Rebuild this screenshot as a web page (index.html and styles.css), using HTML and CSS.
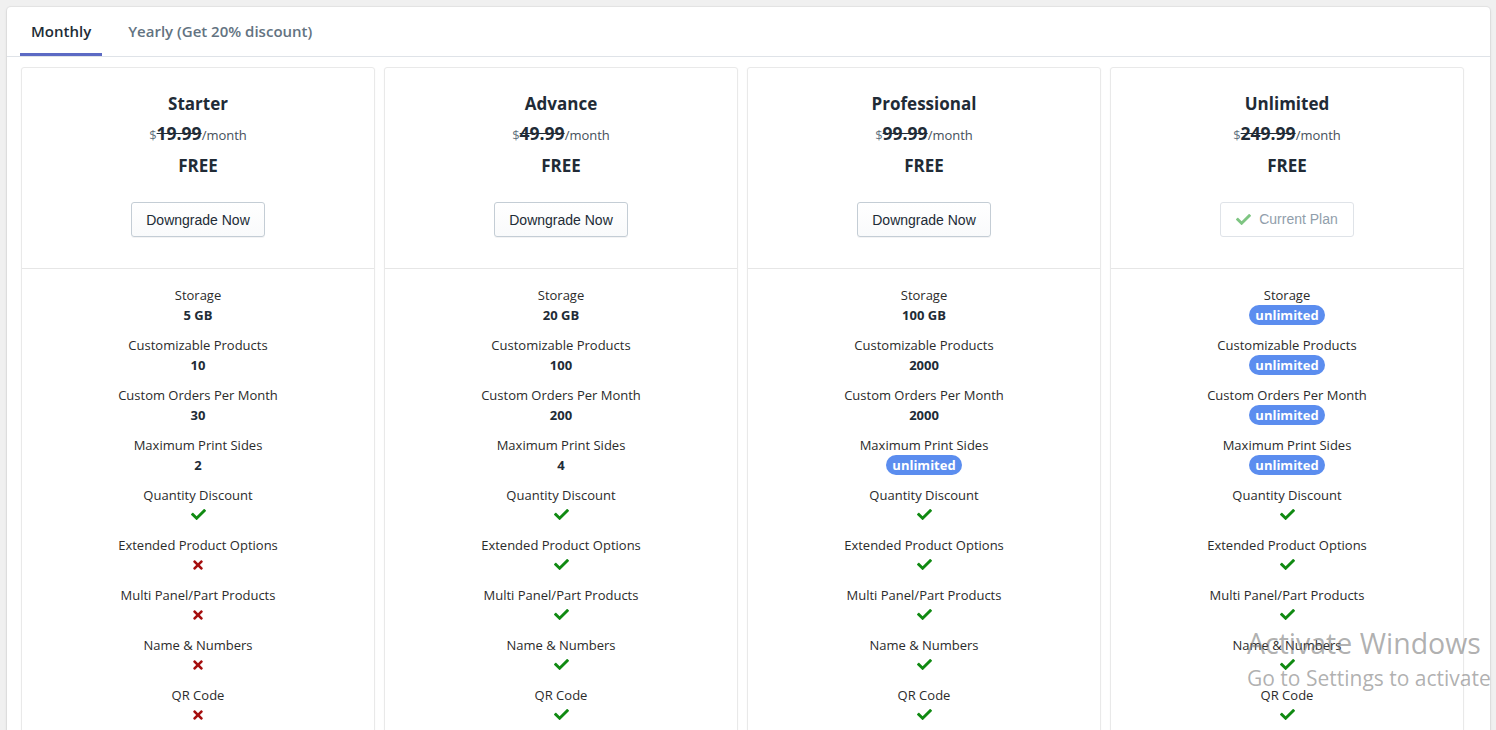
FILE: index.html
```html
<!DOCTYPE html>
<html lang="en">

<head>
    <meta charset="UTF-8">
    <meta name="viewport" content="width=device-width, initial-scale=1.0">
    <title>Plans</title>
    <link rel="stylesheet" href="styles.css">
</head>

<body>
    <div class="panel">
        <div class="tabs">
            <div class="tab active">Monthly</div>
            <div class="tab">Yearly (Get 20% discount)</div>
        </div>
        <div class="plans" id="plans"></div>
    </div>
    <div class="watermark">
        <div class="wm-title">Activate Windows</div>
        <div class="wm-sub">Go to Settings to activate</div>
    </div>
    <script>
        const features = ["Storage", "Customizable Products", "Custom Orders Per Month", "Maximum Print Sides",
            "Quantity Discount", "Extended Product Options", "Multi Panel/Part Products", "Name & Numbers", "QR Code"];
        const plans = [
            { name: "Starter", price: "19.99", values: ["5 GB", "10", "30", "2", true, false, false, false, false] },
            { name: "Advance", price: "49.99", values: ["20 GB", "100", "200", "4", true, true, true, true, true] },
            { name: "Professional", price: "99.99", values: ["100 GB", "2000", "2000", "unlimited", true, true, true, true, true] },
            { name: "Unlimited", price: "249.99", current: true, values: ["unlimited", "unlimited", "unlimited", "unlimited", true, true, true, true, true] }
        ];
        const checkIcon = '<svg class="icon" viewBox="0 0 512 512" width="15" height="15"><path d="M173.9 439.4l-166.4-166.4c-10-10-10-26.2 0-36.2l36.2-36.2c10-10 26.2-10 36.2 0L192 312.7 432.1 72.6c10-10 26.2-10 36.2 0l36.2 36.2c10 10 10 26.2 0 36.2L210.1 439.4c-10 10-26.2 10-36.2 0z"/></svg>';
        const crossIcon = '<svg class="icon" viewBox="0 0 352 512" width="10" height="14"><path d="M242.7 256l100.1-100.1c12.3-12.3 12.3-32.2 0-44.5l-22.2-22.2c-12.3-12.3-32.2-12.3-44.5 0L176 189.3 75.9 89.2c-12.3-12.3-32.2-12.3-44.5 0L9.2 111.5c-12.3 12.3-12.3 32.2 0 44.5L109.3 256 9.2 356.1c-12.3 12.3-12.3 32.2 0 44.5l22.2 22.2c12.3 12.3 32.2 12.3 44.5 0L176 322.7l100.1 100.1c12.3 12.3 32.2 12.3 44.5 0l22.2-22.2c12.3-12.3 12.3-32.2 0-44.5L242.7 256z"/></svg>';
        const container = document.getElementById("plans");
        plans.forEach(plan => {
            let rows = "";
            features.forEach((label, i) => {
                const v = plan.values[i];
                let value;
                if (v === true) value = '<span class="yes">' + checkIcon + '</span>';
                else if (v === false) value = '<span class="no">' + crossIcon + '</span>';
                else if (v === "unlimited") value = '<span class="badge">unlimited</span>';
                else value = '<strong>' + v + '</strong>';
                rows += `<div class="feature"><div class="label">${label.replace("&", "&amp;")}</div><div class="value">${value}</div></div>`;
            });
            const button = plan.current
                ? `<button class="btn" disabled><span class="btn-check">${checkIcon}</span>Current Plan</button>`
                : `<button class="btn">Downgrade Now</button>`;
            const card = document.createElement("div");
            card.classList.add("card");
            card.innerHTML = `
                <div class="card-head">
                    <h3>${plan.name}</h3>
                    <p class="price"><span class="cur">$</span><del>${plan.price}</del>/month</p>
                    <p class="free">FREE</p>
                    ${button}
                </div>
                <div class="card-body">${rows}</div>
            `;
            container.appendChild(card);
        });
    </script>
</body>

</html>
```

FILE: styles.css
```css
* {
    box-sizing: border-box;
    margin: 0;
    padding: 0;
}

body {
    font-family: "Open Sans", "Noto Sans", sans-serif;
    background-color: #f0f0f0;
    color: #212b36;
    height: 730px;
    overflow: hidden;
}

.panel {
    margin: 7px 6px 0 7px;
    background: white;
    border-radius: 4px 4px 0 0;
    box-shadow: 0 0 0 1px rgba(63, 63, 68, 0.05), 0 1px 3px rgba(63, 63, 68, 0.15);
    height: 800px;
}

.tabs {
    display: flex;
    gap: 15px;
    padding: 0 13px;
    height: 50px;
    border-bottom: 1px solid #dfe3e8;
}

.tab {
    padding: 0 11px;
    font-size: 15px;
    font-weight: 600;
    color: #637381;
    line-height: 48px;
    border-bottom: 3px solid transparent;
}

.tab.active {
    color: #212b36;
    border-bottom-color: #5c6ac4;
}

.plans {
    display: grid;
    grid-template-columns: repeat(4, 354px);
    gap: 9px;
    padding: 10px 14px;
}

.card {
    border: 1px solid #e9e9e9;
    border-radius: 3px;
    box-shadow: 0 1px 2px rgba(63, 63, 68, 0.06);
    text-align: center;
}

.card-head {
    padding: 24px 0 31px;
    border-bottom: 1px solid #e6e6e6;
}

.card-head h3 {
    font-size: 17px;
    font-weight: 700;
    line-height: 24px;
}

.price {
    margin-top: 7px;
    font-size: 13px;
    line-height: 20px;
    color: #454f5b;
}

.cur {
    color: #637381;
}

.price del {
    font-size: 17.5px;
    font-weight: 700;
    color: #212b36;
}

.free {
    margin-top: 9px;
    font-size: 17px;
    font-weight: 700;
    line-height: 24px;
}

.btn {
    margin-top: 24px;
    height: 35px;
    padding: 0 14px;
    font-family: "Liberation Sans", Arial, sans-serif;
    font-size: 14px;
    color: #212b36;
    background: linear-gradient(#ffffff, #f9fafb);
    border: 1px solid #c4cdd5;
    border-radius: 3px;
    box-shadow: 0 1px 0 rgba(22, 29, 37, 0.05);
    cursor: pointer;
}

.btn:disabled {
    color: #919eab;
    background: #ffffff;
    border-color: #dfe3e8;
    box-shadow: none;
    padding: 0 15px;
}

.btn-check {
    display: inline-block;
    vertical-align: -1px;
    margin-right: 8px;
    fill: #7ec582;
}

.card-body {
    padding: 16px 0 20px;
}

.feature {
    font-size: 13px;
    line-height: 20px;
    margin-bottom: 10px;
    color: #2b2b2b;
}

.value strong {
    font-weight: 700;
    color: #212b36;
}

.yes {
    fill: #108a12;
}

.no {
    fill: #a50e0e;
}

.icon {
    vertical-align: -2px;
}

.badge {
    display: inline-block;
    background: #5b8def;
    color: white;
    font-weight: 700;
    border-radius: 10px;
    padding: 0 6px;
    line-height: 20px;
}

.watermark {
    position: absolute;
    left: 1247px;
    top: 623px;
    color: rgba(110, 110, 110, 0.55);
    white-space: nowrap;
    font-family: "Open Sans", sans-serif;
    pointer-events: none;
}

.wm-title {
    font-size: 28.5px;
    line-height: 40px;
}

.wm-sub {
    font-size: 21px;
    line-height: 30px;
}
```
